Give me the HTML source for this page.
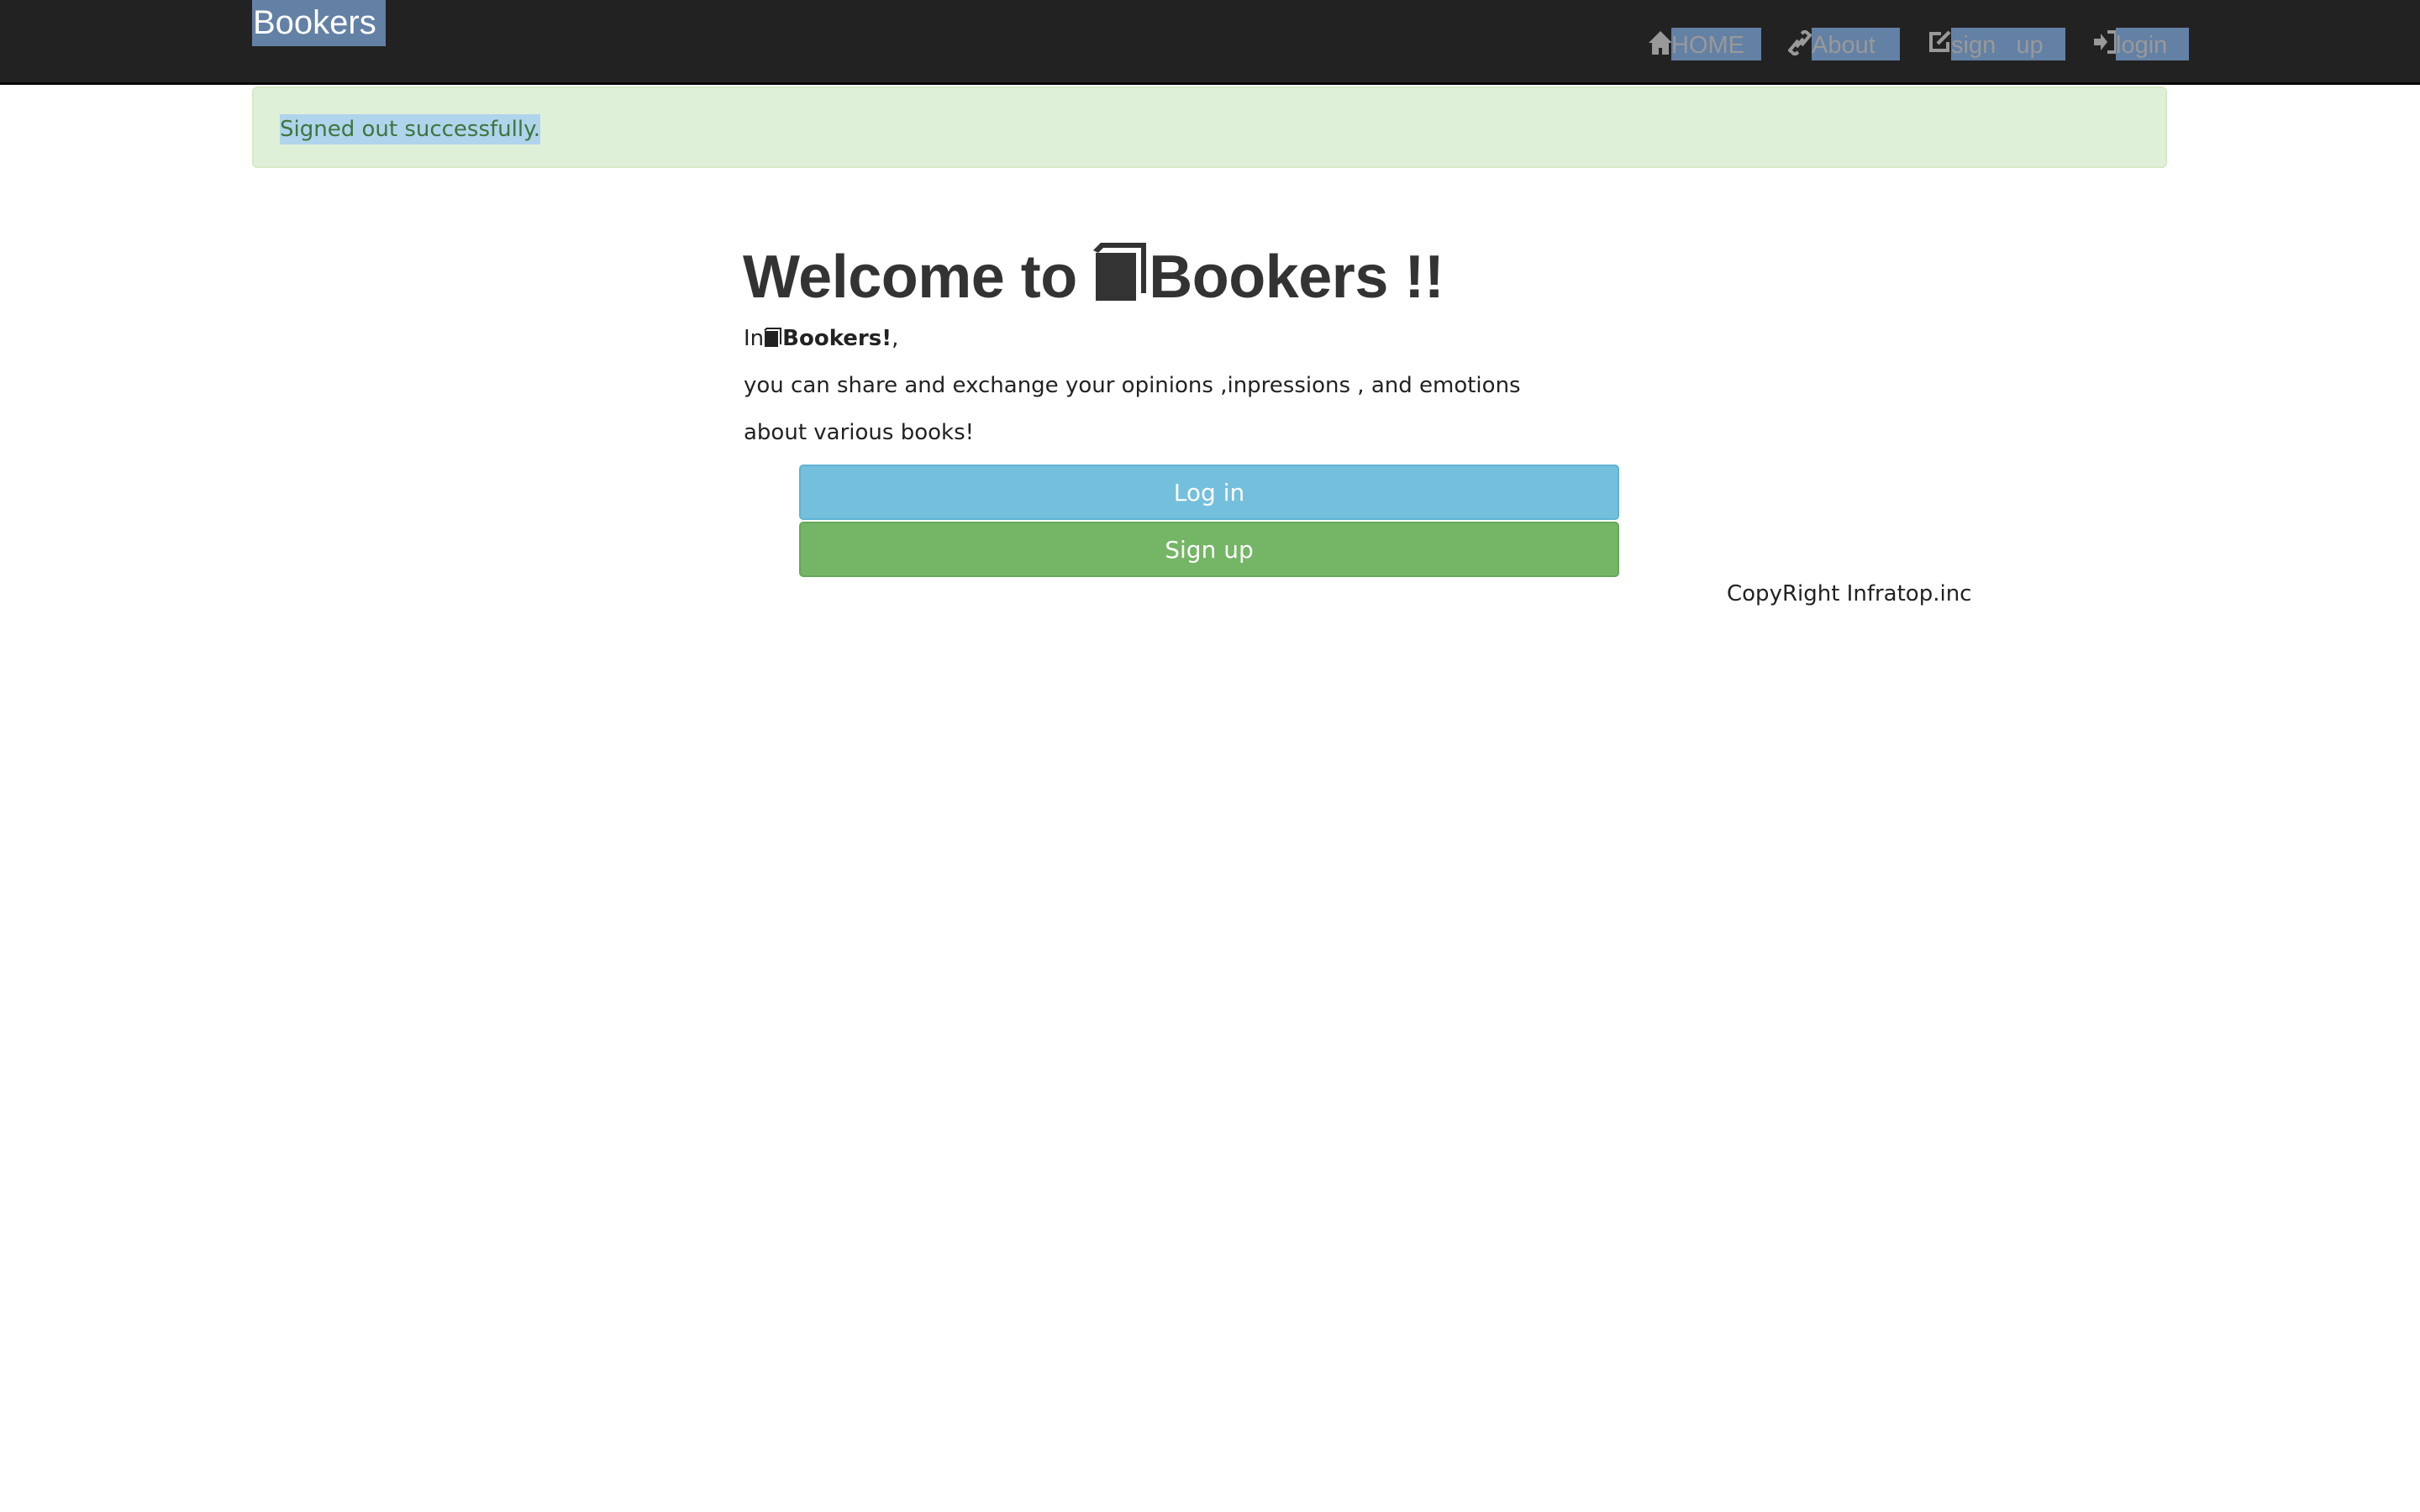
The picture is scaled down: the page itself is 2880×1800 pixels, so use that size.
<!DOCTYPE html>
<html><head><meta charset="utf-8"><style>
*{margin:0;padding:0;box-sizing:border-box}
body{width:2880px;height:1800px;background:#fff;font-family:"DejaVu Sans","Liberation Sans",sans-serif;color:#333;position:relative;overflow:hidden}
.nav{position:absolute;left:0;top:0;width:2880px;height:101px;background:#222;border-bottom:3px solid #080808}
.brand{position:absolute;left:300px;top:0;width:159px;height:55px;background:#6380a5;color:#fff;font-family:"Liberation Sans",sans-serif;font-size:40px;line-height:55px;padding-left:1px}
.ni{position:absolute;top:33px;height:39px;background:#6380a5;color:#999;font-family:"Liberation Sans",sans-serif;font-size:29px;line-height:42px}
.ic{position:absolute;top:36px}
.alert{position:absolute;left:300px;top:103px;width:2279px;height:97px;background:#dff0d8;border:2px solid #d6e9c6;border-radius:6px}
.alert span{position:absolute;left:31px;top:31px;height:36px;background:#b0d4ec;color:#3c763d;font-size:26px;line-height:36px}
h1{position:absolute;left:884px;top:286px;font-family:"Liberation Sans",sans-serif;font-size:72px;font-weight:bold;letter-spacing:-0.5px;color:#333;white-space:nowrap}
.p{position:absolute;left:885px;font-size:26px;white-space:nowrap;color:#222}
.btn{position:absolute;left:951px;width:976px;height:66px;border-radius:5px;color:#fff;font-size:28px;text-align:center;line-height:64px}
</style></head><body>
<div class="nav">
<div class="brand">Bookers</div>
<svg class="ic" style="left:1962px;top:37px" width="28" height="28" viewBox="0 0 14 14"><path d="M7 0L0 7h2v7h4v-4h2v4h4V7h2z" fill="#999"/></svg>
<div class="ni" style="left:1989px;width:107px">HOME</div>
<svg class="ic" style="left:2128px" width="28" height="30" viewBox="0 0 14 15" fill="none" stroke="#999" stroke-width="2"><path d="M8 2l2-1.5 3 2.5-5 6"/><path d="M6 13l-2 1.5-3-2.5 5-6"/><path d="M9 5L5 10"/></svg>
<div class="ni" style="left:2156px;width:105px">About</div>
<svg class="ic" style="left:2294px" width="28" height="28" viewBox="0 0 14 14" fill="none" stroke="#999" stroke-width="2"><path d="M8 2H2v10h10V7"/><path d="M6 8l7-7" stroke-width="2.2"/></svg>
<div class="ni" style="left:2322px;width:136px">sign&nbsp;&nbsp;&nbsp;up</div>
<svg class="ic" style="left:2492px" width="30" height="28" viewBox="0 0 15 14"><path d="M0 5h4V2l4 5-4 5V9H0z" fill="#999"/><path d="M8 1h5v12H8" fill="none" stroke="#999" stroke-width="2"/></svg>
<div class="ni" style="left:2518px;width:87px">login</div>
</div>
<div class="alert"><span>Signed out successfully.</span></div>
<h1>Welcome to <svg width="66" height="72" viewBox="0 0 22 24" style="vertical-align:-4px"><path d="M0 4L3 1h18v20h-2V3H4L2 5v19h15V5H2z" fill="#333"/><path d="M1 5h16v19H1z" fill="#333"/></svg>Bookers !!</h1>
<div class="p" style="top:388px">In<svg width="22" height="26" viewBox="0 0 22 24" style="vertical-align:-3px"><path d="M0 4L3 1h18v20h-2V3H4L2 5v19h15V5H2z" fill="#222"/><path d="M1 5h16v19H1z" fill="#222"/></svg><b>Bookers!</b>,</div>
<div class="p" style="top:444px">you can share and exchange your opinions ,inpressions , and emotions</div>
<div class="p" style="top:500px">about various books!</div>
<div class="btn" style="top:553px;background:#74bfdc;border:2px solid #5fb3d4">Log in</div>
<div class="btn" style="top:621px;background:#74b566;border:2px solid #65aa57">Sign up</div>
<div class="p" style="left:2055px;top:692px;font-size:26px">CopyRight Infratop.inc</div>
</body></html>
